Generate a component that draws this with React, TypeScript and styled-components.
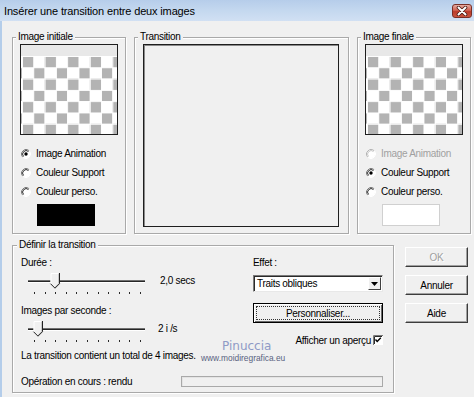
import React from 'react';
import styled, { createGlobalStyle } from 'styled-components';

// Boîte de dialogue "Insérer une transition" façon Windows classique

const GlobalStyle = createGlobalStyle`
  html, body {
    margin: 0;
    padding: 0;
    background: #f0f0f0;
  }
  body {
    font-family: "Liberation Sans", Arial, sans-serif;
    font-size: 10px;
    letter-spacing: -0.3px;
    color: #000;
  }
`;

const Window = styled.div`
  position: relative;
  width: 474px;
  height: 397px;
  display: flex;
  flex-direction: column;
  overflow: hidden;
  background: #f0f0f0;
`;

const TitleBar = styled.div`
  flex: none;
  height: 21px;
  display: flex;
  align-items: center;
  justify-content: space-between;
  padding: 0 2px 0 4px;
  background: linear-gradient(180deg, #b6cdea 0%, #c4d8ef 50%, #d1e0f3 100%);
  font-size: 11px;
  letter-spacing: -0.15px;
`;

const CloseButton = styled.div`
  box-sizing: border-box;
  width: 20px;
  height: 14px;
  display: flex;
  align-items: center;
  justify-content: center;
  border: 1px solid #7a2e25;
  border-radius: 3px;
  background: linear-gradient(180deg, #e6aca2 0%, #d0604f 45%, #bb3b2b 55%, #c9553f 100%);
`;

const Body = styled.div`
  flex: 1;
  display: flex;
  flex-direction: column;
  border-left: 2px solid #b4cdea;
  padding: 10px 0 0 10px;
`;

const TopRow = styled.div`
  display: flex;
  gap: 8px;
`;

const BottomRow = styled.div`
  display: flex;
  align-items: flex-start;
  gap: 11px;
  margin-top: 5px;
`;

const Group = styled.fieldset<{ $w: number; $h?: number; $pl?: number; $pr?: number; $pb?: number }>`
  box-sizing: border-box;
  width: ${p => p.$w}px;
  ${p => (p.$h ? `height: ${p.$h}px;` : '')}
  min-width: 0;
  margin: 0;
  padding: 0 ${p => p.$pr ?? 6}px ${p => p.$pb ?? 0}px ${p => p.$pl ?? 7}px;
  border: 1px solid #a9a9a9;
  box-shadow: inset 1px 1px 0 #fff, 1px 1px 0 #fff;
`;

const Legend = styled.legend`
  margin-left: -4px;
  padding: 0 2px;
  line-height: 12px;
  background: #f0f0f0;
`;

const Preview = styled.div`
  box-sizing: border-box;
  width: 98px;
  height: 91px;
  margin-top: 1px;
  display: flex;
  flex-direction: column;
  border: 1px solid #1e1e1e;
  box-shadow: inset 1px 1px 0 #8a8a8a;
  background: #fff;
`;

const PreviewBand = styled.div`
  flex: none;
  height: 11px;
  background: #e8e8e8;
`;

const Checker = styled.div`
  flex: 1;
  background-color: #fff;
  background-image:
    linear-gradient(90deg, #fff 1px, transparent 1px),
    linear-gradient(#fff 1px, transparent 1px),
    conic-gradient(#fff 0 25%, #b3b3b3 0 50%, #fff 0 75%, #b3b3b3 0);
  background-size: 11.3px 11.3px, 11.3px 11.3px, 22.6px 22.6px;
  background-position: 1px 0, 1px 0, 1px 0;
`;

const TransitionView = styled.div`
  box-sizing: border-box;
  width: 196px;
  height: 183px;
  margin-top: 1px;
  border: 1px solid #1e1e1e;
  box-shadow: inset 1px 1px 0 #8a8a8a;
  background: #f0f0f0;
`;

const RadioList = styled.div`
  margin-top: 9px;
  display: flex;
  flex-direction: column;
`;

const RadioRow = styled.div<{ $disabled?: boolean }>`
  height: 19px;
  display: flex;
  align-items: center;
  gap: 5px;
  padding-left: 1px;
  color: ${p => (p.$disabled ? '#a0a0a0' : '#000')};
`;

const Swatch = styled.div<{ $color: string }>`
  box-sizing: border-box;
  width: 58px;
  height: 22px;
  margin: 3px 0 0 17px;
  background: ${p => p.$color};
  border: 1px solid ${p => (p.$color === '#000' ? '#000' : '#d0d0d0')};
`;

const DefineGrid = styled.div`
  display: grid;
  grid-template-columns: 1fr 130px;
`;

const Column = styled.div`
  display: flex;
  flex-direction: column;
`;

const Label = styled.div<{ $mt?: number }>`
  margin-top: ${p => p.$mt ?? 0}px;
  line-height: 12px;
  white-space: nowrap;
`;

const SliderRow = styled.div`
  display: flex;
  align-items: flex-start;
  margin-top: 1px;
`;

const SliderBox = styled.div`
  width: 120px;
  height: 27px;
  margin-left: 7px;
`;

const SliderValue = styled.div`
  margin: 5px 0 0 12px;
  line-height: 12px;
`;

const Select = styled.div`
  box-sizing: border-box;
  height: 17px;
  margin-top: 6px;
  display: flex;
  align-items: center;
  padding: 0 1px 0 3px;
  background: #fff;
  border: 1px solid;
  border-color: #7a7a7a #e8e8e8 #e8e8e8 #7a7a7a;
  box-shadow: inset 1px 1px 0 #2a2a2a;
`;

const SelectArrow = styled.div`
  box-sizing: border-box;
  width: 13px;
  height: 13px;
  margin-left: auto;
  display: flex;
  align-items: center;
  justify-content: center;
  background: #f0f0f0;
  border: 1px solid;
  border-color: #fff #404040 #404040 #fff;
`;

const DefaultButton = styled.div`
  box-sizing: border-box;
  height: 20px;
  margin-top: 11px;
  display: flex;
  align-items: center;
  justify-content: center;
  border: 1px solid #000;
  background: #f0f0f0;
  box-shadow: inset 1px 1px 0 #fff, inset -1px -1px 0 #6a6a6a;
  outline: 1px dotted #333;
  outline-offset: -4px;
`;

const CheckRow = styled.div`
  height: 12px;
  margin-top: 11px;
  display: flex;
  align-items: center;
  justify-content: flex-end;
  gap: 2px;
`;

const Footer = styled.div`
  grid-column: 1 / -1;
  margin-top: 13px;
  display: flex;
  align-items: center;
  height: 12px;
`;

const FooterLabel = styled.div`
  width: 160px;
  flex: none;
`;

const Progress = styled.div`
  box-sizing: border-box;
  flex: 1;
  height: 11px;
  border: 1px solid #a9a9a9;
  box-shadow: inset 1px 1px 0 #e4e4e4;
`;

const ButtonColumn = styled.div`
  margin-top: 8px;
  display: flex;
  flex-direction: column;
  gap: 8px;
`;

const Button = styled.div<{ $disabled?: boolean }>`
  box-sizing: border-box;
  width: 63px;
  height: 20px;
  display: flex;
  align-items: center;
  justify-content: center;
  background: #f0f0f0;
  border: 1px solid;
  border-color: #fff #3c3c3c #3c3c3c #fff;
  box-shadow: inset -1px -1px 0 #a0a0a0;
  color: ${p => (p.$disabled ? '#a0a0a0' : '#000')};
  text-shadow: ${p => (p.$disabled ? '1px 1px 0 #fff' : 'none')};
`;

const Watermark = styled.div`
  position: absolute;
  left: 201px;
  top: 339px;
  display: flex;
  flex-direction: column;
  align-items: flex-start;
  pointer-events: none;
`;

const WatermarkName = styled.div`
  margin-left: 21px;
  font-family: "DejaVu Sans", sans-serif;
  font-size: 12px;
  line-height: 14px;
  letter-spacing: 0;
  color: #8f9ac6;
`;

const WatermarkUrl = styled.div`
  font-size: 8.4px;
  line-height: 10px;
  letter-spacing: 0;
  color: #58627f;
`;

const Radio = ({ checked, disabled }: { checked?: boolean; disabled?: boolean }) => (
  <svg width="10" height="10" viewBox="0 0 10 10">
    <circle cx="5" cy="5" r="4" fill="#fff" />
    <path d="M8.18 1.82 A4.5 4.5 0 0 0 1.82 8.18" fill="none" stroke={disabled ? '#b4b4b4' : '#7a7a7a'} />
    <path d="M7.47 2.53 A3.5 3.5 0 0 0 2.53 7.47" fill="none" stroke={disabled ? '#c8c8c8' : '#2a2a2a'} />
    <path d="M8.18 1.82 A4.5 4.5 0 0 1 1.82 8.18" fill="none" stroke="#fff" />
    {checked && <circle cx="5" cy="5" r="1.7" fill="#000" />}
  </svg>
);

const Checkbox = () => (
  <svg width="10" height="10" viewBox="0 0 10 10">
    <rect x="0" y="0" width="10" height="10" fill="#fff" />
    <path d="M0.5 10 V0.5 H10" fill="none" stroke="#7a7a7a" />
    <path d="M1.5 9 V1.5 H9" fill="none" stroke="#2a2a2a" />
    <path d="M2.5 4.5 L4.2 6.5 L7.8 2.8" fill="none" stroke="#000" strokeWidth="1.4" />
  </svg>
);

// pointe du curseur : cx = centre en px dans la piste
const Slider = ({ cx }: { cx: number }) => {
  const ticks = Array.from({ length: 11 }, (_, i) => 6 + i * 10.6);
  return (
    <SliderBox>
      <svg width="120" height="27" viewBox="0 0 120 27">
        <rect x="0" y="10" width="117" height="1" fill="#707070" />
        <rect x="0" y="11" width="117" height="1" fill="#262626" />
        <rect x="0" y="12" width="117" height="1" fill="#fff" />
        {ticks.map(t => (
          <rect key={t} x={Math.round(t)} y="22" width="1" height="2" fill="#2a2a2a" />
        ))}
        <polygon
          points={`${cx - 4.5},3 ${cx + 4.5},3 ${cx + 4.5},13.5 ${cx},18 ${cx - 4.5},13.5`}
          fill="#f0f0f0"
        />
        <path d={`M${cx - 4} 13.5 V3.5 H${cx + 4}`} fill="none" stroke="#fff" />
        <path d={`M${cx + 4} 3.5 V13.5 L${cx} 17.5`} fill="none" stroke="#a0a0a0" />
        <path d={`M${cx + 4.5} 3 V13.7 L${cx} 18.2 L${cx - 4.5} 13.7`} fill="none" stroke="#222" />
      </svg>
    </SliderBox>
  );
};

const App = () => {
  return (
    <>
      <GlobalStyle />
      <Window>
        <TitleBar>
          <span>Insérer une transition entre deux images</span>
          <CloseButton>
            <svg width="14" height="10" viewBox="0 0 14 10">
              <path d="M3.5 1.5 L10.5 8.5 M10.5 1.5 L3.5 8.5" stroke="#4a1a14" strokeWidth="3.6" strokeLinecap="round" />
              <path d="M3.5 1.5 L10.5 8.5 M10.5 1.5 L3.5 8.5" stroke="#fff" strokeWidth="2" strokeLinecap="round" />
            </svg>
          </CloseButton>
        </TitleBar>

        <Body>
          <TopRow>
            <Group $w={114} $h={203}>
              <Legend>Image initiale</Legend>
              <Preview>
                <PreviewBand />
                <Checker />
              </Preview>
              <RadioList>
                <RadioRow><Radio checked />Image Animation</RadioRow>
                <RadioRow><Radio />Couleur Support</RadioRow>
                <RadioRow><Radio />Couleur perso.</RadioRow>
              </RadioList>
              <Swatch $color="#000" />
            </Group>

            <Group $w={215} $h={203} $pl={8}>
              <Legend style={{ marginLeft: -5 }}>Transition</Legend>
              <TransitionView />
            </Group>

            <Group $w={114} $h={203}>
              <Legend>Image finale</Legend>
              <Preview>
                <PreviewBand />
                <Checker />
              </Preview>
              <RadioList>
                <RadioRow $disabled><Radio disabled />Image Animation</RadioRow>
                <RadioRow><Radio checked />Couleur Support</RadioRow>
                <RadioRow><Radio />Couleur perso.</RadioRow>
              </RadioList>
              <Swatch $color="#fff" />
            </Group>
          </TopRow>

          <BottomRow>
            <Group $w={382} $pl={8} $pr={10} $pb={5}>
              <Legend>Définir la transition</Legend>
              <DefineGrid>
                <Column>
                  <Label $mt={6}>Durée :</Label>
                  <SliderRow>
                    <Slider cx={27} />
                    <SliderValue>2,0 secs</SliderValue>
                  </SliderRow>
                  <Label $mt={8}>Images par seconde :</Label>
                  <SliderRow>
                    <Slider cx={10} />
                    <SliderValue style={{ marginLeft: 10 }}>2 i /s</SliderValue>
                  </SliderRow>
                  <Label $mt={5}>La transition contient un total de 4 images.</Label>
                </Column>
                <Column>
                  <Label $mt={6}>Effet :</Label>
                  <Select>
                    Traits obliques
                    <SelectArrow>
                      <svg width="7" height="4" viewBox="0 0 7 4">
                        <path d="M0 0 H7 L3.5 4 Z" fill="#000" />
                      </svg>
                    </SelectArrow>
                  </Select>
                  <DefaultButton>Personnaliser...</DefaultButton>
                  <CheckRow>
                    Afficher un aperçu
                    <Checkbox />
                  </CheckRow>
                </Column>
                <Footer>
                  <FooterLabel>Opération en cours : rendu</FooterLabel>
                  <Progress />
                </Footer>
              </DefineGrid>
            </Group>

            <ButtonColumn>
              <Button $disabled>OK</Button>
              <Button>Annuler</Button>
              <Button>Aide</Button>
            </ButtonColumn>
          </BottomRow>
        </Body>

        <Watermark>
          <WatermarkName>Pinuccia</WatermarkName>
          <WatermarkUrl>www.moidiregrafica.eu</WatermarkUrl>
        </Watermark>
      </Window>
    </>
  );
};

export default App;
